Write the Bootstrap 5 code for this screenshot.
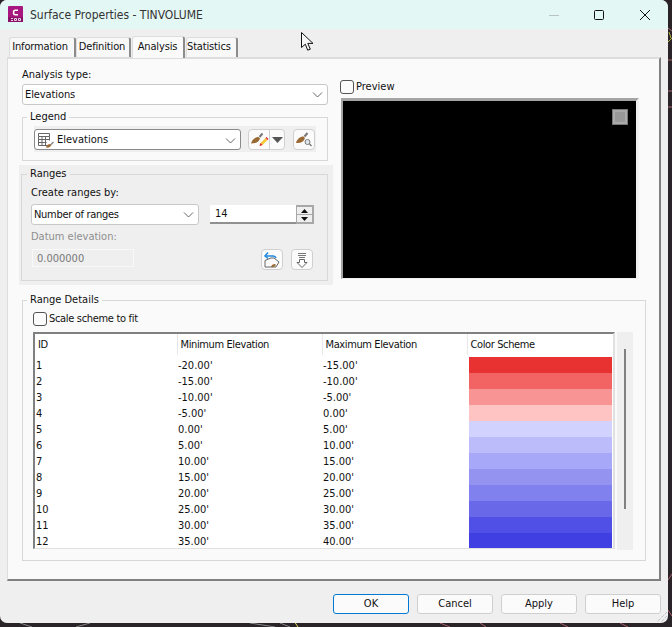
<!DOCTYPE html>
<html lang="en">
<head>
<meta charset="utf-8">
<title>Surface Properties - TINVOLUME</title>
<link href="https://cdn.jsdelivr.net/npm/bootstrap@5.3.0/dist/css/bootstrap.min.css" rel="stylesheet">
<style>
html,body{height:100%;margin:0}
body{background:#2a2327;font:11px/14px "DejaVu Sans Condensed","DejaVu Sans",sans-serif;font-stretch:condensed;color:#111;overflow:hidden;position:relative;width:672px;height:627px}
.bgart{position:absolute;left:0;top:0}
.dlg{position:relative;width:668px;height:623px;background:#efefef;border-radius:7px;overflow:hidden}
.ttl{height:29px;background:#e3f7f5;color:#333;font-size:12px;padding-left:8px}
.appicon{width:16px;height:17px;margin-right:6px}
.ttl-btn{width:10px;height:10px}
.tb-min{margin-right:35px}.tb-max{margin-right:36px}.tb-cl{margin-right:18px}
.tabrow{height:28px;padding:7px 0 0 9px;border:0;align-items:flex-end;flex-wrap:nowrap}
.tabrow .nav-link{height:20px;padding:2px 0 0;margin:0;text-align:center;font-size:11px;letter-spacing:-.15px;color:#111;background:#f8f8f8;border:1px solid #ddd;border-bottom:0;border-right:2px solid #8c8c8c;border-radius:3px 3px 0 0}
.tabrow .nav-link.active{height:22px;padding-top:3px;background:#fafafa;color:#111;border-color:#ddd;border-right:2px solid #8c8c8c;margin:0 1px 0 1px;position:relative;top:1px}
.t1{width:67px;padding-right:4px!important}.t2{width:55px;padding-right:2px!important}.t3{width:53px;padding-right:1px!important}.t4{width:52px;padding-right:6px!important}
.pane{margin-left:7px;width:654px;height:524px;background:#fafafa;border-top:2px solid #ddd;border-left:1px solid #ddd;border-right:2px solid #808080;border-bottom:2px solid #808080;padding:9px 0 0 14px}
.leftc{width:306px}
.rightc{margin-left:12px;padding-top:12px}
.cmb.form-select{height:21px;min-height:0;padding:1px 20px 0 2px;font-size:11px;letter-spacing:-.1px;line-height:18px;border:1px solid #c8c8c8;border-radius:3px;background-color:#fff;color:#111;background-image:url("data:image/svg+xml,%3Csvg xmlns='http://www.w3.org/2000/svg' viewBox='0 0 11 11'%3E%3Cpath d='M1 3.500l4.500 4.500L10 3.500' fill='none' stroke='%23666'/%3E%3C/svg%3E");background-position:right 4px center;background-size:11px 11px;font-family:inherit;box-shadow:none}
.cmb-narrow{letter-spacing:-.3px!important}
.cmb-full{margin-top:2px}
.fset{border:1px solid #d8d8d8;padding:0;margin:0;min-width:0}
.fset legend{float:none;width:auto;font-size:11px;line-height:14px;padding:0 3px}
.f-legend{margin-top:5px;height:51px;padding-left:11px}
.f-legend legend{margin:0 0 0 -7px}
.strip{margin-top:2px;height:26px;width:282px;background:#efefef;padding-top:3px;gap:7px}
.legend-cmb{width:207px;height:21px;background:#fff;border:1px solid #8a8a8a;border-radius:3px;padding:1px 4px 0 2px;position:relative}
.legend-cmb svg.gr{margin-right:2px}
.ibtn.btn{width:22px;height:21px;padding:0;background:#fbfbfb;border:1px solid #d0d0d0;border-radius:4px;line-height:0;--bs-btn-hover-bg:#fbfbfb}
.ibtn-split{width:37px;height:21px;background:#fbfbfb;border:1px solid #d0d0d0;border-radius:4px}
.ibtn-split .sp1{width:21px;border-right:1px solid #d0d0d0;height:100%}
.ibtn-split .sp2{flex:1}
.ml1{margin-left:1px}
.rpanel{margin:4px -5px 0 -3px;width:314px;height:120px;background:#efefef;padding:2px 0 0 2px}
.f-ranges{width:307px;height:114px;padding-left:9px;background:transparent}
.f-ranges legend{margin:0 0 0 -4px}
.f-ranges .fl1{margin-top:5px}
.rowr{margin-top:4px;height:21px}
.rowr .cmb{width:168px}
.numwrap{margin-left:11px;height:19px;margin-top:1px;width:104px}
.numin.form-control{width:86px;height:19px;min-height:0;padding:0 0 0 5px;font-size:11px;line-height:17px;border:0;border-bottom:2px solid #909090;border-radius:0;background:#fff;font-family:inherit;color:#111}
.spin{width:18px;height:19px;border:2px solid #a8a8a8;border-left-width:1px;background:#efefef}
.spin i{display:flex;flex:1;align-items:center;justify-content:center}
.spin i:first-child{border-bottom:1px solid #a8a8a8}
.dlabel{color:#8e8e8e;margin-top:5px}
.drow{margin-top:5px;height:21px;padding-left:1px}
.dinput.form-control{width:102px;height:18px;min-height:0;padding:0 0 0 4px;font-size:11px;line-height:16px;background:#efefef;border:1px solid #f8f8f8;border-radius:0;color:#777;font-family:inherit}
.dbtn1{margin-left:127px}
.dbtn2{margin-left:8px}
.cb.form-check-input{width:14px;height:14px;margin:0;border:1px solid #555;border-radius:3px;background-color:#fbfbfb;flex:none;float:none}
.cbl{margin:0;padding-left:2px;line-height:14px}
.tight3{letter-spacing:-.32px}
.chk{min-height:0;padding:0;margin:0}
.pbox{margin:4px 0 0 1px;width:298px;height:181px;background:#000;border-top:3px solid #a4a4a4;border-left:2px solid #a4a4a4;border-right:3px solid #f0f0f0;border-bottom:1px solid #f0f0f0;padding:8px 8px 0 0}
.psq{width:16px;height:16px;border:1px solid #777;background:#999;box-shadow:inset 0 0 0 2px #aaa;margin-left:auto}
.f-details{margin-top:8px;width:624px;height:268px;padding-left:10px}
.f-details legend{margin:0 0 0 -6px}
.f-details .chk{margin-top:5px}
.tblrow{margin-top:6px;height:218px;gap:2px}
.tblbox{width:582px;height:217px;background:#fff;border-top:2px solid #808080;border-left:2px solid #808080;border-right:2px solid #e0e0e0;border-bottom:1px solid #e0e0e0;overflow:hidden}
.rtbl.table{width:578px;table-layout:fixed;margin:0;--bs-table-bg:transparent;color:#111;font-size:11px;line-height:15px}
.rtbl th,.rtbl td{padding:0;border:0;font-weight:400;white-space:nowrap}
.rtbl th{height:21px;padding:0 0 0 3px;letter-spacing:-.38px;box-shadow:none;border-right:1px solid #e8e8e8;vertical-align:middle}
.rtbl .gaprow td{height:2px;line-height:2px;font-size:0;padding:0}
.rtbl td{height:16px;padding:1px 0 0 1px}
.rtbl .swc{padding:0 1px 0 2px}
.swb{height:16px}
.s1{background:#e83232}.s2{background:#f26464}.s3{background:#f89494}.s4{background:#fec3c3}
.s5{background:#d2d2fe}.s6{background:#bcbcfb}.s7{background:#a8a8f8}.s8{background:#9494f0}
.s9{background:#8080ee}.s10{background:#6868e8}.s11{background:#5050e6}.s12{background:#3f3fe2}
.sbar{width:16px;height:218px;background:#efefef;padding:17px 0 0 7px}
.sthumb{width:2px;height:160px;background:#808080}
.foot{padding:13px 7px 0 0;gap:8px}
.dbtn.btn{width:76px;height:20px;padding:0;font-size:11px;line-height:18px;color:#111;background:#fbfbfb;border:1px solid #cfcfcf;border-radius:3px;font-family:inherit}
.dbtn.okb{border-color:#0078d4}
.cursor{position:absolute;left:301px;top:32px}
.grip{position:absolute;right:0;bottom:0}
</style>
</head>
<body>
<svg class="bgart" width="672" height="627" aria-hidden="true">
<g fill="none" stroke-width="1">
<path d="M668 28l4 3M668 60h4M668 91h4M668 107h4" stroke="#a06a70"/>
<path d="M669 32l2 6M668 42l4-4" stroke="#b0b040"/>
<path d="M20 623l12 4M90 623l-14 4M250 623l25 4M280 623l10 4" stroke="#888"/>
<path d="M294 621l4 6" stroke="#dddd55"/>
<path d="M440 623l10 4M480 623l6 4M560 623l8 4M620 623l8 4M668 580l4-6M668 610l4 6" stroke="#a8606a"/>
</g>
</svg>
<div class="dlg">
  <div class="ttl d-flex align-items-center">
    <svg class="appicon" viewBox="0 0 16 17" aria-hidden="true"><rect width="15" height="16" rx="1" fill="#a8177f"/><rect y="11" width="15" height="5" fill="#8b1069"/><path d="M10 4.200H7.200a1.600 1.600 0 0 0-1.600 1.600v1.400a1.600 1.600 0 0 0 1.600 1.600H10" fill="none" stroke="#fff" stroke-width="1.600"/><path d="M3 12.500h2M3 14.500h2M6.500 12.500h2v2h-2zM10.500 12.500h2v2h-2z" fill="none" stroke="#fff" stroke-width=".8"/></svg>
    <span class="flex-grow-1">Surface Properties - TINVOLUME</span>
    <svg class="ttl-btn tb-min" viewBox="0 0 10 10" aria-hidden="true"><path d="M0 5.500h10" stroke="#b8c4c4"/></svg>
    <svg class="ttl-btn tb-max" viewBox="0 0 10 10" aria-hidden="true"><rect x=".5" y=".5" width="9" height="9" rx="1" fill="none" stroke="#111"/></svg>
    <svg class="ttl-btn tb-cl" viewBox="0 0 10 10" aria-hidden="true"><path d="M0 0l10 10M10 0L0 10" stroke="#111"/></svg>
  </div>
  <ul class="nav nav-tabs tabrow">
    <li class="nav-item"><a class="nav-link t1" href="#">Information</a></li>
    <li class="nav-item"><a class="nav-link t2" href="#">Definition</a></li>
    <li class="nav-item"><a class="nav-link active t3" href="#">Analysis</a></li>
    <li class="nav-item"><a class="nav-link t4" href="#">Statistics</a></li>
  </ul>
  <div class="pane">
    <div class="d-flex">
      <div class="leftc">
        <div>Analysis type:</div>
        <select class="form-select cmb cmb-full"><option>Elevations</option></select>
        <fieldset class="fset f-legend">
          <legend>Legend</legend>
          <div class="strip d-flex">
            <div class="legend-cmb d-flex align-items-center">
              <svg class="gr" width="18" height="17" viewBox="0 0 18 17" aria-hidden="true"><path d="M1.500 1.500h11v3h-11zM1.500 4.500v9h9M5 4.500v9M8.500 4.500v9M12.500 4.500v4M1.500 7.500h11M1.500 10.500h8" fill="none" stroke="#666"/><path d="M9 15.500c.5-2.500 2.500-3.500 4.500-3.500l1 1C13.500 15 11.500 16 9 15.500z" fill="#9a6a35"/><path d="M14 12.500l2.500-2.500" stroke="#888" stroke-width="1.500"/></svg>
              <span class="flex-grow-1">Elevations</span>
              <svg width="11" height="11" viewBox="0 0 11 11" aria-hidden="true"><path d="M1 3.500l4.500 4.500L10 3.500" fill="none" stroke="#666"/></svg>
            </div>
            <div class="ibtn-split d-flex">
              <div class="sp1 d-flex align-items-center justify-content-center">
                <svg width="19" height="17" viewBox="0 0 19 17" aria-hidden="true"><path d="M1 12.500c1-4 4-6.500 7.500-6.500L10 7.500C9 11 5.500 12.500 1 12.500z" fill="#9a6a35"/><path d="M9.500 6l3-3.500" stroke="#777" stroke-width="2"/><path d="M9.500 15l1-3 5-5 2 2-5 5z" fill="#f5c93a"/><path d="M9.500 15l1-3 2 2z" fill="#e8243c"/><path d="M15.500 7l1-1 2 2-1 1z" fill="#e8243c"/></svg>
              </div>
              <div class="sp2 d-flex align-items-center justify-content-center">
                <svg width="11" height="6" viewBox="0 0 11 6" aria-hidden="true"><path d="M0 0h11L5.500 6z" fill="#555"/></svg>
              </div>
            </div>
            <button type="button" class="btn ibtn ml1" aria-label="Legend preview">
              <svg width="18" height="17" viewBox="0 0 18 17" aria-hidden="true"><path d="M1 12c1-4 4-6.500 7.500-6.500L10 7C9 11 5.500 12.500 1 12z" fill="#9a6a35"/><path d="M9.500 5.500l3-3.500" stroke="#777" stroke-width="2"/><circle cx="12.500" cy="11" r="2.500" fill="#dfe7ea" stroke="#777"/><path d="M14.500 13l2 2" stroke="#777" stroke-width="1.500"/></svg>
            </button>
          </div>
        </fieldset>
        <div class="rpanel">
          <fieldset class="fset f-ranges">
            <legend>Ranges</legend>
            <div class="fl1">Create ranges by:</div>
            <div class="rowr d-flex">
              <select class="form-select cmb cmb-narrow"><option>Number of ranges</option></select>
              <div class="numwrap d-flex">
                <input class="form-control numin" type="text" value="14" aria-label="Number of ranges">
                <div class="spin d-flex flex-column">
                  <i><svg width="7" height="4" viewBox="0 0 7 4" aria-hidden="true"><path d="M3.500 0L7 4H0z" fill="#111"/></svg></i>
                  <i><svg width="7" height="4" viewBox="0 0 7 4" aria-hidden="true"><path d="M0 0h7L3.500 4z" fill="#111"/></svg></i>
                </div>
              </div>
            </div>
            <div class="dlabel">Datum elevation:</div>
            <div class="drow d-flex align-items-start">
              <input class="form-control dinput" type="text" value="0.000000" disabled aria-label="Datum elevation">
              <button type="button" class="btn ibtn dbtn1" aria-label="Renumber">
                <svg width="18" height="18" viewBox="0 0 18 18" aria-hidden="true"><path d="M2 5h8a3 3 0 0 1 3 2" fill="none" stroke="#1e88e0" stroke-width="1.500"/><path d="M5 1.500L2 5l3 2.500" fill="none" stroke="#1e88e0" stroke-width="1.500"/><path d="M2 16V9.500L8 7h3l5 4-3 5z" fill="none" stroke="#666"/><path d="M8 16c.5-2 2-3 4-3l1 1c-1 1.500-3 2.500-5 2z" fill="#9a6a35"/></svg>
              </button>
              <button type="button" class="btn ibtn dbtn2" aria-label="Apply down">
                <svg width="14" height="18" viewBox="0 0 14 18" aria-hidden="true"><path d="M3 2.500h8M3 4.500h8M4 6.500h6" stroke="#777"/><path d="M4.500 8.500h5v3H12L7 16.500 2 11.500h2.500z" fill="#fff" stroke="#666"/></svg>
              </button>
            </div>
          </fieldset>
        </div>
      </div>
      <div class="rightc">
        <div class="form-check chk d-flex align-items-center">
          <input class="form-check-input cb" type="checkbox" id="pv">
          <label class="form-check-label cbl" for="pv">Preview</label>
        </div>
        <div class="pbox"><div class="psq"></div></div>
      </div>
    </div>
    <fieldset class="fset f-details">
      <legend>Range Details</legend>
      <div class="form-check chk d-flex align-items-center">
        <input class="form-check-input cb" type="checkbox" id="sc">
        <label class="form-check-label cbl tight3" for="sc">Scale scheme to fit</label>
      </div>
      <div class="tblrow d-flex">
        <div class="tblbox">
          <table class="table rtbl">
            <colgroup><col style="width:142px"><col style="width:145px"><col style="width:145px"><col style="width:146px"></colgroup>
            <thead><tr><th>ID</th><th>Minimum Elevation</th><th>Maximum Elevation</th><th>Color Scheme</th></tr></thead>
            <tbody>
              <tr class="gaprow"><td></td><td></td><td></td><td></td></tr>
              <tr><td>1</td><td>-20.00'</td><td>-15.00'</td><td class="swc"><div class="swb s1"></div></td></tr>
              <tr><td>2</td><td>-15.00'</td><td>-10.00'</td><td class="swc"><div class="swb s2"></div></td></tr>
              <tr><td>3</td><td>-10.00'</td><td>-5.00'</td><td class="swc"><div class="swb s3"></div></td></tr>
              <tr><td>4</td><td>-5.00'</td><td>0.00'</td><td class="swc"><div class="swb s4"></div></td></tr>
              <tr><td>5</td><td>0.00'</td><td>5.00'</td><td class="swc"><div class="swb s5"></div></td></tr>
              <tr><td>6</td><td>5.00'</td><td>10.00'</td><td class="swc"><div class="swb s6"></div></td></tr>
              <tr><td>7</td><td>10.00'</td><td>15.00'</td><td class="swc"><div class="swb s7"></div></td></tr>
              <tr><td>8</td><td>15.00'</td><td>20.00'</td><td class="swc"><div class="swb s8"></div></td></tr>
              <tr><td>9</td><td>20.00'</td><td>25.00'</td><td class="swc"><div class="swb s9"></div></td></tr>
              <tr><td>10</td><td>25.00'</td><td>30.00'</td><td class="swc"><div class="swb s10"></div></td></tr>
              <tr><td>11</td><td>30.00'</td><td>35.00'</td><td class="swc"><div class="swb s11"></div></td></tr>
              <tr><td>12</td><td>35.00'</td><td>40.00'</td><td class="swc"><div class="swb s12"></div></td></tr>
            </tbody>
          </table>
        </div>
        <div class="sbar"><div class="sthumb"></div></div>
      </div>
    </fieldset>
  </div>
  <div class="foot d-flex justify-content-end">
    <button type="button" class="btn dbtn okb">OK</button>
    <button type="button" class="btn dbtn">Cancel</button>
    <button type="button" class="btn dbtn">Apply</button>
    <button type="button" class="btn dbtn">Help</button>
  </div>
  <svg class="grip" width="14" height="14" viewBox="0 0 14 14" aria-hidden="true"><path d="M13 3L3 13M13 7l-6 6M13 11l-2 2" stroke="#aaa" stroke-dasharray="1 1"/></svg>
</div>
<svg class="cursor" width="14" height="20" viewBox="0 0 14 20" aria-hidden="true"><path d="M.5.500v15l3.800-3.300 2.400 6 2.600-1-2.500-5.800h5.200z" fill="#f6f6f6" stroke="#111" stroke-linejoin="round"/></svg>
</body>
</html>
